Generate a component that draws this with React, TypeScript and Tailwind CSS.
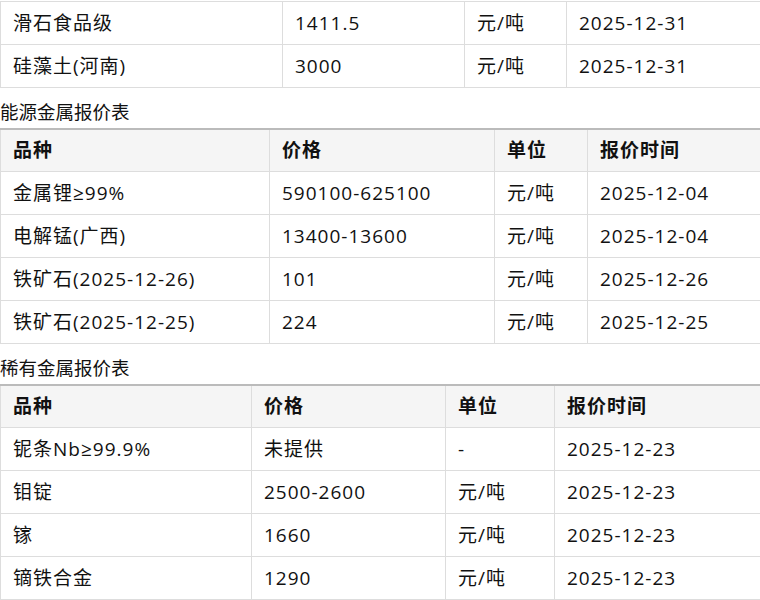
import React from "react";

type TableProps = {
  gridClass: string;
  header?: string[];
  rows: string[][];
  thickTop?: boolean;
};

function Table({ gridClass, header, rows, thickTop }: TableProps) {
  return (
    <div
      className={
        thickTop ? "border-t-2 border-[#bbbbbb]" : "border-t border-[#dddddd]"
      }
    >
      {header && (
        <div
          className={`grid ${gridClass} h-[42px] bg-[#f5f5f5] border-b border-[#dddddd] font-bold`}
        >
          {header.map((h, i) => (
            <div
              key={i}
              className="flex items-center pl-3 border-l border-[#dddddd] whitespace-nowrap"
            >
              {h}
            </div>
          ))}
        </div>
      )}
      {rows.map((r, ri) => (
        <div
          key={ri}
          className={`grid ${gridClass} h-[43px] border-b border-[#dddddd]`}
        >
          {r.map((c, ci) => (
            <div
              key={ci}
              className="flex items-center pl-3 border-l border-[#dddddd] whitespace-nowrap"
            >
              {c}
            </div>
          ))}
        </div>
      ))}
    </div>
  );
}

function Heading({ children }: { children: React.ReactNode }) {
  return (
    <div className="h-[40px] flex items-end pb-1 text-[18.5px] leading-6 tracking-normal">
      {children}
    </div>
  );
}

const HEAD = ["品种", "价格", "单位", "报价时间"];

export default function App() {
  return (
    <div
      className="w-[760px] h-[600px] overflow-hidden bg-white text-[#111111] text-[19px] tracking-[1px]"
      style={{ fontFamily: '"Open Sans", "Noto Sans CJK SC", sans-serif' }}
    >
      <div className="pt-[1px]">
        <Table
          gridClass="grid-cols-[282px_182px_102px_1fr]"
          rows={[
            ["滑石食品级", "1411.5", "元/吨", "2025-12-31"],
            ["硅藻土(河南)", "3000", "元/吨", "2025-12-31"],
          ]}
        />
      </div>
      <Heading>能源金属报价表</Heading>
      <Table
        thickTop
        gridClass="grid-cols-[269px_225px_93px_1fr]"
        header={HEAD}
        rows={[
          ["金属锂≥99%", "590100-625100", "元/吨", "2025-12-04"],
          ["电解锰(广西)", "13400-13600", "元/吨", "2025-12-04"],
          ["铁矿石(2025-12-26)", "101", "元/吨", "2025-12-26"],
          ["铁矿石(2025-12-25)", "224", "元/吨", "2025-12-25"],
        ]}
      />
      <Heading>稀有金属报价表</Heading>
      <Table
        thickTop
        gridClass="grid-cols-[251px_194px_109px_1fr]"
        header={HEAD}
        rows={[
          ["铌条Nb≥99.9%", "未提供", "-", "2025-12-23"],
          ["钼锭", "2500-2600", "元/吨", "2025-12-23"],
          ["镓", "1660", "元/吨", "2025-12-23"],
          ["镝铁合金", "1290", "元/吨", "2025-12-23"],
        ]}
      />
    </div>
  );
}
